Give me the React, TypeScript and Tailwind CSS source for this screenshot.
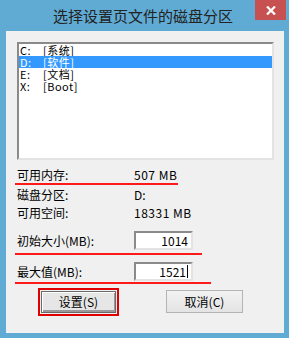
import React from 'react';

const drives = [
  { letter: 'C:', name: '[系统]' },
  { letter: 'D:', name: '[软件]' },
  { letter: 'E:', name: '[文档]' },
  { letter: 'X:', name: '[Boot]' },
];

const font = "font-['Noto_Sans_CJK_SC',sans-serif]";

export default function App() {
  const selected = 1;

  return (
    <div className={`w-[289px] h-[338px] bg-[#60abd4] flex flex-col ${font} text-[12px] text-black`}>
      {/* title bar */}
      <div className="h-[31px] flex items-start">
        <div className="flex-1 h-[31px] flex items-center justify-center pl-[31px] text-[15px] text-[#222] leading-none">
          选择设置页文件的磁盘分区
        </div>
        <div className="w-[31px] h-[20px] mr-[3px] bg-[#c75050] flex items-center justify-center">
          <svg width="10" height="9" viewBox="0 0 10 9">
            <path d="M1 0.5 L9 8.5 M9 0.5 L1 8.5" stroke="#fff" strokeWidth="2.2" />
          </svg>
        </div>
      </div>

      {/* client area */}
      <div className="ml-[6px] mr-[5px] h-[302px] bg-[#f0f0f0] flex flex-col">
        {/* drive list */}
        <div className="mt-[11px] ml-[11px] w-[257px] h-[118px] bg-white border-2 border-t-[#8a8a8a] border-l-[#8a8a8a] border-r-[#e3e3e3] border-b-[#e3e3e3] flex flex-col">
          {drives.map((d, i) => (
            <div
              key={d.letter}
              className={`h-[12px] flex items-center text-[11px] leading-[11px] pl-[1px] ${
                i === selected ? 'bg-[#3399ff] text-white' : 'text-black'
              }`}
            >
              <span className="w-[23px] tracking-[0.5px]">{d.letter}</span>
              <span className="tracking-[0.5px]">{d.name}</span>
            </div>
          ))}
        </div>

        {/* info rows */}
        <div className="mt-[9px] h-[12px] pl-[11px] flex items-center leading-[12px]">
          <span className="w-[117px]">可用内存:</span>
          <span className="tracking-[0.5px]">507 MB</span>
        </div>
        <div className="mt-[2px] ml-[9px] w-[163px] h-[2px] bg-[#ff1a1a]" />
        <div className="mt-[4px] h-[12px] pl-[11px] flex items-center leading-[12px]">
          <span className="w-[117px]">磁盘分区:</span>
          <span>D:</span>
        </div>
        <div className="mt-[6px] h-[12px] pl-[11px] flex items-center leading-[12px]">
          <span className="w-[117px]">可用空间:</span>
          <span className="tracking-[0.5px]">18331 MB</span>
        </div>

        {/* size inputs */}
        <div className="mt-[12px] h-[19px] pl-[11px] flex items-center leading-[12px]">
          <span className="w-[117px]">初始大小(MB):</span>
          <div className="w-[59px] h-[19px] bg-white border-2 border-t-[#8a8a8a] border-l-[#8a8a8a] border-r-[#e3e3e3] border-b-[#e3e3e3] flex items-center justify-end pr-[3px]">
            1014
          </div>
        </div>
        <div className="mt-[3px] ml-[9px] w-[187px] h-[2px] bg-[#ff1a1a]" />
        <div className="mt-[7px] h-[19px] pl-[11px] flex items-center leading-[12px]">
          <span className="w-[117px]">最大值(MB):</span>
          <div className="w-[59px] h-[19px] bg-white border-2 border-t-[#8a8a8a] border-l-[#8a8a8a] border-r-[#e3e3e3] border-b-[#e3e3e3] flex items-center justify-end pr-[3px]">
            1521<span className="ml-[1px] w-[1px] h-[13px] bg-black" />
          </div>
        </div>
        <div className="mt-[1px] ml-[9px] w-[196px] h-[2px] bg-[#ff1a1a]" />

        {/* buttons */}
        <div className="mt-[4px] h-[28px] flex items-start">
          <div className="ml-[32px] w-[81px] h-[28px] border-2 border-[#e00000] p-[1px]">
            <button className="w-full h-full bg-[#e6e6e6] border border-[#6a6a6a] shadow-[inset_1px_1px_#ffffff,inset_-1px_-2px_#9a9a9a] flex items-center justify-center leading-none text-[12px]">
              设置(S)
            </button>
          </div>
          <button className="ml-[47px] mt-[2px] w-[77px] h-[23px] bg-gradient-to-b from-[#f2f2f2] to-[#e4e4e4] border border-[#b4b4b4] flex items-center justify-center leading-none text-[12px]">
            取消(C)
          </button>
        </div>
      </div>
    </div>
  );
}
